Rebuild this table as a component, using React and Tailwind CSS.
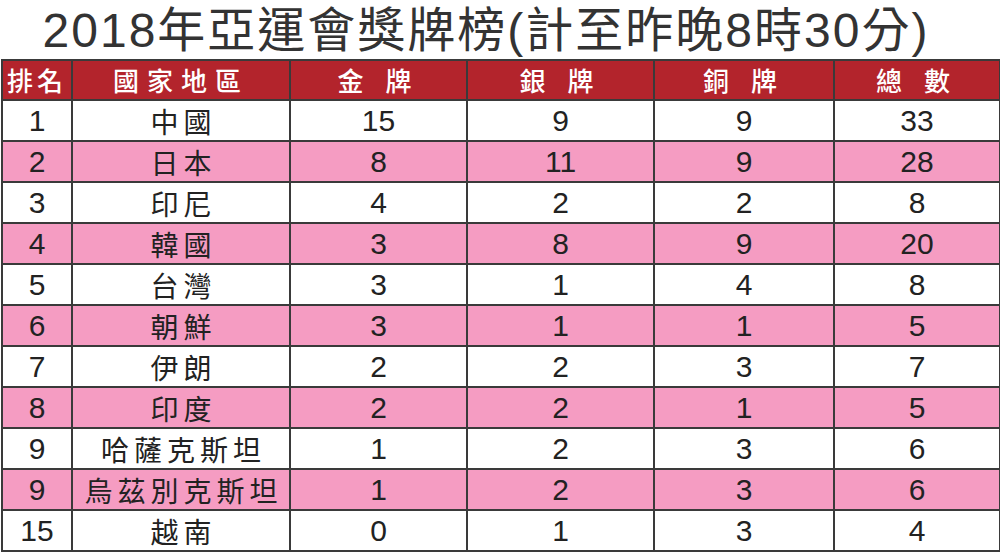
import React from 'react';

const rows = [
  ['1', '中國', '15', '9', '9', '33'],
  ['2', '日本', '8', '11', '9', '28'],
  ['3', '印尼', '4', '2', '2', '8'],
  ['4', '韓國', '3', '8', '9', '20'],
  ['5', '台灣', '3', '1', '4', '8'],
  ['6', '朝鮮', '3', '1', '1', '5'],
  ['7', '伊朗', '2', '2', '3', '7'],
  ['8', '印度', '2', '2', '1', '5'],
  ['9', '哈薩克斯坦', '1', '2', '3', '6'],
  ['9', '烏茲別克斯坦', '1', '2', '3', '6'],
  ['15', '越南', '0', '1', '3', '4'],
];

const headers = [
  { label: '排名', w: 'w-[70px]', track: 'tracking-[4px]' },
  { label: '國家地區', w: 'w-[218px]', track: 'tracking-[8px]' },
  { label: '金 牌', w: 'w-[177px]', track: 'tracking-[8px]' },
  { label: '銀 牌', w: 'w-[187px]', track: 'tracking-[8px]' },
  { label: '銅 牌', w: 'w-[180px]', track: 'tracking-[8px]' },
  { label: '總 數', w: 'w-[166px]', track: 'tracking-[8px]' },
];

const cjk = { fontFamily: undefined };

export default function App() {
  return (
    <div className="w-[1000px] h-[553px] bg-white overflow-hidden">
      {/* Title */}
      <div className="h-[59px] flex items-center justify-center pr-[28px]">
        <h1 className="text-[48px] leading-none tracking-[2px] text-[#333] font-['Liberation_Sans','Noto_Sans_CJK_TC',sans-serif] font-normal pt-[2px]">
          2018年亞運會獎牌榜(計至昨晚8時30分)
        </h1>
      </div>

      {/* Medal table */}
      <table className="border-collapse ml-[1px] w-[998px] table-fixed">
        <thead>
          <tr className="h-[40px] bg-[#b3242c]">
            {headers.map((h) => (
              <th
                key={h.label}
                className={`${h.w} ${h.track} border-2 border-[#3a3a3a] text-white text-[26px] font-medium leading-none font-['Noto_Sans_CJK_TC',sans-serif] whitespace-pre`}
              >
                {h.label}
              </th>
            ))}
          </tr>
        </thead>
        <tbody>
          {rows.map((r, i) => (
            <tr key={i} className={`h-[41px] ${i % 2 === 1 ? 'bg-[#f59cc2]' : 'bg-white'}`}>
              {r.map((c, j) => (
                <td
                  key={j}
                  className={
                    j === 1
                      ? 'border-2 border-[#3a3a3a] text-center text-[28px] leading-none tracking-[5px] text-[#222] font-["Noto_Sans_CJK_TC",sans-serif] pl-[5px]'
                      : 'border-2 border-[#3a3a3a] text-center text-[30px] leading-none text-[#222] font-["Liberation_Sans",sans-serif]'
                  }
                >
                  {c}
                </td>
              ))}
            </tr>
          ))}
        </tbody>
      </table>
    </div>
  );
}
